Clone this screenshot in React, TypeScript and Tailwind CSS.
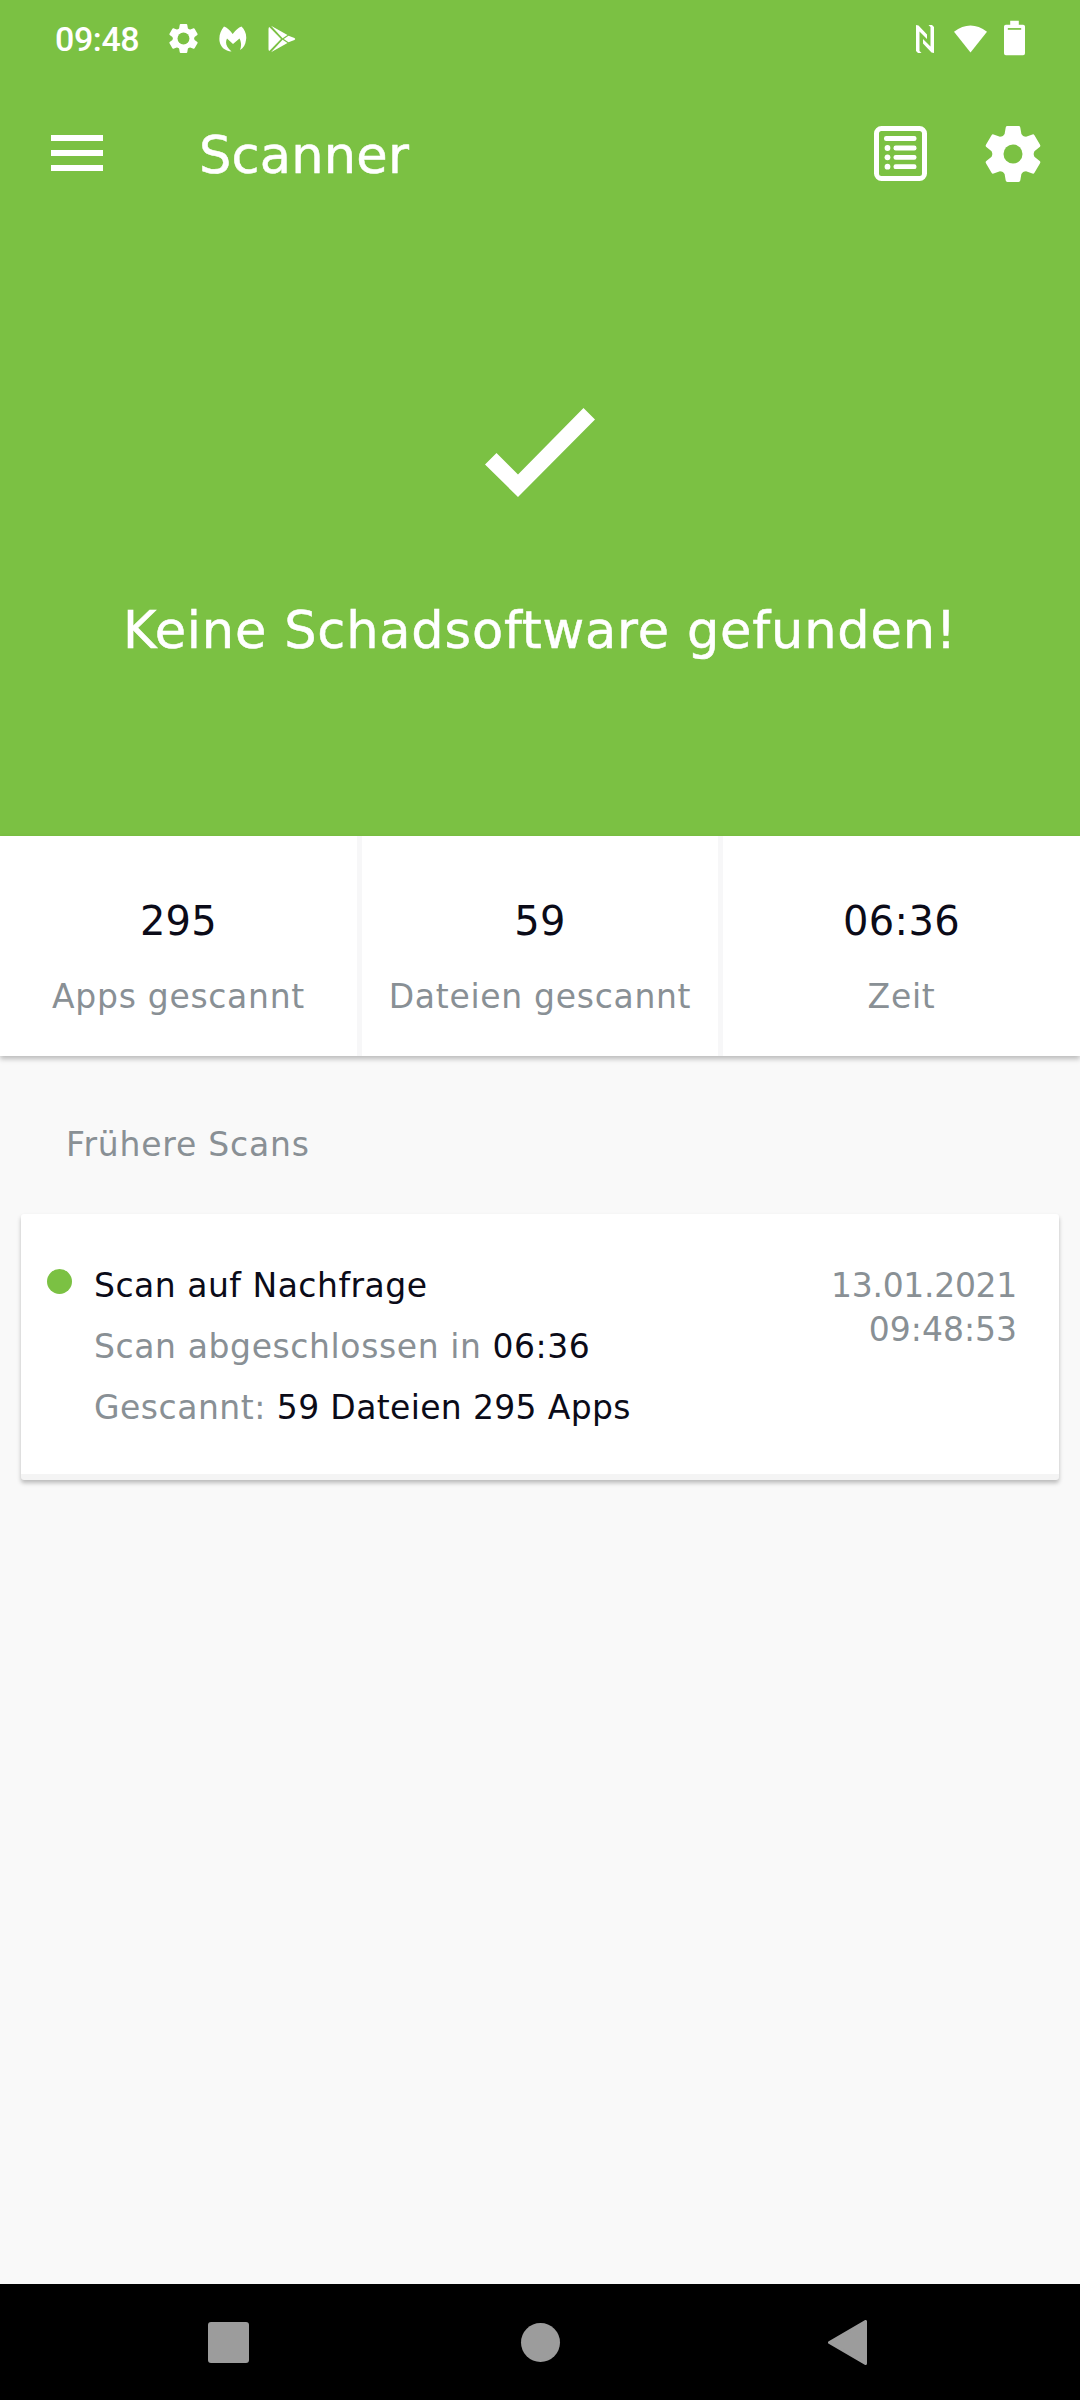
import React from "react";

interface Stat {
  value: string;
  label: string;
}

interface ScanEntry {
  title: string;
  duration: string;
  files: number;
  apps: number;
  date: string;
  time: string;
}

const stats: Stat[] = [
  { value: "295", label: "Apps gescannt" },
  { value: "59", label: "Dateien gescannt" },
  { value: "06:36", label: "Zeit" },
];

const previousScans: ScanEntry[] = [
  {
    title: "Scan auf Nachfrage",
    duration: "06:36",
    files: 59,
    apps: 295,
    date: "13.01.2021",
    time: "09:48:53",
  },
];

const toothAngles = [0, 60, 120, 180, 240, 300];

const GearIcon: React.FC<{ className: string; hole: number }> = ({
  className,
  hole,
}) => (
  <svg viewBox="-10 -10 20 20" className={className}>
    {toothAngles.map((angle) => (
      <path
        key={angle}
        d="M-2-10H2Q2.5-10 2.6-9.5L3-7.100 4.800-5V0H-4.800V-5L-3-7.100-2.600-9.500Q-2.500-10-2-10Z"
        fill="#fff"
        transform={`rotate(${angle})`}
      />
    ))}
    <circle r={hole} fill="#7bc143" />
  </svg>
);

const StatusBar: React.FC = () => (
  <div className="flex h-[77px] items-center pl-[55px] pr-[55px] text-white">
    <span className="w-[114px] pt-[1px] font-['Roboto'] text-[34px] font-medium leading-none tracking-[-0.4px]">
      09:48
    </span>
    <GearIcon className="h-[29px] w-[29px]" hole={4.1} />
    <svg viewBox="0 0 28 26" className="ml-[21px] h-[26px] w-[28px]" fill="#fff">
      <path d="M5 .5Q9.500 2 13.700 8Q18 2 22.500 .5C26 4 28 9 27 14C26.500 18.500 24.500 22 21 24C22.500 20.500 22.500 16.500 20.500 12.500L14 18 8 12.500C6 16.500 7 21 12.500 25.500C6 25 1.500 21 .6 15.500C-.3 10 1.500 4.500 5 .5Z" />
    </svg>
    <svg viewBox="0 0 28 28" className="ml-[21px] h-[28px] w-[28px]" fill="#fff">
      <path d="M1.300 2L13 14 1.300 26Q.5 25.500 .5 24V4Q.5 2.500 1.300 2Z" />
      <path d="M3 .8L19.500 10 14.600 13.300Z" />
      <path d="M3 27.200L19.500 18 14.600 14.700Z" />
      <path d="M20.500 10.700L26.500 13Q28 14 26.500 15L20.500 17.300 15.700 14Z" />
    </svg>
    <svg viewBox="0 0 18 28" className="ml-auto h-[28px] w-[18px]" fill="#fff">
      <path d="M0 0L2.500 .5 11 9.500V14L3.500 6.500V26L5.500 28H2L0 26Z" />
      <path d="M18 28L15.500 27.500 7 18.500V14L14.500 21.500V2L12.500 0H16L18 2Z" />
    </svg>
    <svg viewBox="0 0 34 28" className="ml-[20px] h-[28px] w-[33px]" fill="#fff">
      <path d="M0 6.500Q17-6.500 34 6.500L17 28Z" />
    </svg>
    <svg viewBox="0 0 22 36" className="mb-[1px] ml-[17px] h-[36px] w-[21px]">
      <path
        d="M6.500 0H15.500V4H20Q22 4 22 6V34Q22 36 20 36H2Q0 36 0 34V6Q0 4 2 4H6.500Z"
        fill="#fff"
      />
      <path d="M4 8.500H18" stroke="#7bc143" strokeWidth="1.8" />
    </svg>
  </div>
);

const ListIcon: React.FC = () => (
  <svg viewBox="0 0 53 55" className="h-[55px] w-[53px]" fill="#fff">
    <rect
      x="2.500"
      y="2.500"
      width="48"
      height="50"
      rx="5"
      fill="none"
      stroke="#fff"
      strokeWidth="5"
    />
    <rect x="10" y="10" width="32.500" height="5" rx="2.200" />
    {[22, 31.3, 40.700].map((y) => (
      <g key={y}>
        <circle cx="13.500" cy={y} r="2.900" />
        <rect x="19.500" y={y - 2.4} width="23" height="4.800" rx="2.200" />
      </g>
    ))}
  </svg>
);

const Header: React.FC = () => (
  <header className="h-[836px] bg-[#7bc143] text-white">
    <StatusBar />
    <div className="flex h-[153px] items-center pl-[51px] pr-[39px]">
      <div className="flex w-[52px] flex-col gap-[9px] pb-[1px]">
        <span className="h-[6px] bg-white" />
        <span className="h-[6px] bg-white" />
        <span className="h-[6px] bg-white" />
      </div>
      <h1 className="ml-[96px] pt-[4px] text-[51px] leading-none tracking-[0.2px] [-webkit-text-stroke:0.5px_white]">
        Scanner
      </h1>
      <div className="ml-auto flex items-center gap-[58px]">
        <ListIcon />
        <GearIcon className="h-[56px] w-[56px]" hole={3.4} />
      </div>
    </div>
    <div className="flex flex-col items-center pt-[178px]">
      <svg viewBox="0 0 110 89" className="h-[89px] w-[110px]" fill="#fff">
        <path d="M0 56.500L11.500 45 33 66.500 98.500 0 110 11.500 33 89Z" />
      </svg>
      <p className="mt-[94px] text-[51px] leading-[80px] tracking-[0.8px] [-webkit-text-stroke:0.5px_white]">
        Keine Schadsoftware gefunden!
      </p>
    </div>
  </header>
);

const StatsRow: React.FC = () => (
  <section className="grid h-[220px] grid-cols-[357px_356px_357px] gap-[5px] bg-[#f7f7f8] shadow-[0_3px_5px_rgba(0,0,0,0.25)]">
    {stats.map((stat) => (
      <div key={stat.label} className="bg-white pt-[55px] text-center">
        <div className="text-[40px] leading-[60px] tracking-[0.3px] text-[#0b0b18]">
          {stat.value}
        </div>
        <div className="mt-[24px] whitespace-nowrap text-[33px] leading-[44px] tracking-[0.7px] text-[#899095]">
          {stat.label}
        </div>
      </div>
    ))}
  </section>
);

const ScanCard: React.FC<{ scan: ScanEntry }> = ({ scan }) => (
  <article className="mx-[21px] flex h-[266px] rounded-[3px] border-b-[6px] border-[#f4f4f4] bg-white pl-[26px] pr-[42px] text-[33px] shadow-[0_3px_4px_rgba(0,0,0,0.25)]">
    <span className="mt-[55px] h-[25px] w-[25px] rounded-full bg-[#7bc143]" />
    <div className="ml-[22px] pt-[41px] leading-[61px] tracking-[0.5px] text-[#0b0b18]">
      <div>{scan.title}</div>
      <div>
        <span className="tracking-[0.6px] text-[#899095]">
          Scan abgeschlossen in
        </span>{" "}
        {scan.duration}
      </div>
      <div>
        <span className="text-[#899095]">Gescannt:</span>{" "}
        <span className="tracking-[0.35px]">
          {scan.files} Dateien {scan.apps} Apps
        </span>
      </div>
    </div>
    <div className="ml-auto pt-[50px] text-right leading-[44px] text-[#899095]">
      <div className="tracking-[-0.3px]">{scan.date}</div>
      <div>{scan.time}</div>
    </div>
  </article>
);

const NavBar: React.FC = () => (
  <nav className="flex h-[116px] items-center bg-black pl-[208px]">
    <span className="h-[41px] w-[41px] rounded-[3px] bg-[#9c9c9c]" />
    <span className="ml-[272px] h-[39px] w-[39px] rounded-full bg-[#9c9c9c]" />
    <svg viewBox="0 0 39 45" className="ml-[268px] h-[45px] w-[39px]">
      <path
        d="M1.500 22.500L37.500 1.500V43.500Z"
        fill="#9c9c9c"
        stroke="#9c9c9c"
        strokeWidth="3"
        strokeLinejoin="round"
      />
    </svg>
  </nav>
);

const App: React.FC = () => {
  return (
    <main className="flex h-[2400px] w-[1080px] flex-col bg-[#f9f9f9] font-['DejaVu_Sans','Noto_Sans',sans-serif]">
      <Header />
      <StatsRow />
      <section className="flex-1">
        <h2 className="mb-[47px] ml-[66px] mt-[67px] text-[33px] leading-[44px] tracking-[0.8px] text-[#899095]">
          Frühere Scans
        </h2>
        {previousScans.map((scan) => (
          <ScanCard key={`${scan.date} ${scan.time}`} scan={scan} />
        ))}
      </section>
      <NavBar />
    </main>
  );
};

export default App;
